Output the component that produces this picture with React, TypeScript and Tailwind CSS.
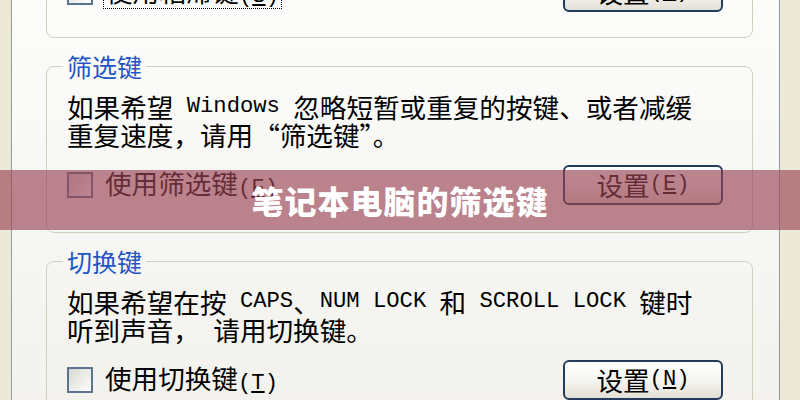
import React from "react";

// Latin runs in the old bitmap UI font are half-width monospace
function Mono({ children }: { children: React.ReactNode }) {
  return (
    <span className="font-['Liberation_Mono',monospace] text-[22.2px] leading-none whitespace-pre">
      {children}
    </span>
  );
}

function CheckBox() {
  return (
    <span className="block w-[26px] h-[26px] shrink-0 border-2 border-[#5a7590] bg-linear-to-br from-[#d8d8d2] to-white" />
  );
}

function SetButton({ hotkey }: { hotkey: string }) {
  return (
    <button className="ml-auto w-[160px] h-[40px] shrink-0 rounded-[6px] border-2 border-[#233b5d] bg-linear-to-b from-white via-[#f6f5f1] to-[#e2e0d6] flex items-center justify-center text-[26.6px] leading-none text-black">
      设置
      <Mono>
        (<u>{hotkey}</u>)
      </Mono>
    </button>
  );
}

interface GroupProps {
  title: string;
  lines: React.ReactNode[];
  label: string;
  labelKey: string;
  buttonKey: string;
}

function Group({ title, lines, label, labelKey, buttonKey }: GroupProps) {
  return (
    <fieldset className="mt-[15px] w-[707px] shrink-0 rounded-[8px] border border-[#d0d0bf] pl-[20px] pr-[29px] pb-[27px]">
      <legend className="ml-[-4px] px-[4px] text-[25px] leading-[26px] text-[#1f56c4]">
        {title}
      </legend>
      <div className="pt-[14px] text-[26.6px] leading-[28px] whitespace-nowrap">
        {lines.map((line, i) => (
          <div key={i} className="h-[28px] flex items-center">
            {line}
          </div>
        ))}
      </div>
      <div className="mt-[16px] h-[40px] flex items-center">
        <CheckBox />
        <span className="ml-[12px] text-[26.6px] leading-none whitespace-nowrap">
          {label}
          <Mono>
            (<u>{labelKey}</u>)
          </Mono>
        </span>
        <SetButton hotkey={buttonKey} />
      </div>
    </fieldset>
  );
}

export default function App() {
  return (
    <div
      lang="zh-CN"
      className="relative w-[800px] h-[400px] overflow-hidden flex bg-[#ece9d8] pl-[11px] text-black font-['Noto_Sans_CJK_SC',sans-serif]"
    >
      {/* dialog tab panel */}
      <div className="w-[769px] h-full shrink-0 flex flex-col border-x border-[#919b9c] bg-linear-to-b from-[#fcfcfb] to-[#f3f2ed] pl-[34px]">
        {/* StickyKeys group, mostly scrolled off the top */}
        <div className="mt-[-42px] h-[80px] w-[707px] shrink-0 flex items-end rounded-[8px] border border-[#d0d0bf] pl-[20px] pr-[29px] pb-[25px]">
          <div className="h-[40px] w-full flex items-center">
            <CheckBox />
            <span className="ml-[10px] px-[2px] border border-dotted border-black text-[26.6px] leading-[30px] whitespace-nowrap">
              使用粘滞键
              <Mono>
                (<u>S</u>)
              </Mono>
            </span>
            <SetButton hotkey="L" />
          </div>
        </div>

        <Group
          title="筛选键"
          lines={[
            <>
              如果希望<Mono> Windows </Mono>忽略短暂或重复的按键、或者减缓
            </>,
            <>重复速度，请用“筛选键”。</>,
          ]}
          label="使用筛选键"
          labelKey="F"
          buttonKey="E"
        />

        <Group
          title="切换键"
          lines={[
            <>
              如果希望在按<Mono> CAPS</Mono>、<Mono>NUM LOCK </Mono>和
              <Mono> SCROLL LOCK </Mono>键时
            </>,
            <>
              听到声音，<Mono> </Mono>请用切换键。
            </>,
          ]}
          label="使用切换键"
          labelKey="T"
          buttonKey="N"
        />
      </div>

      {/* caption banner laid over the screenshot */}
      <div className="absolute inset-x-0 top-[170px] h-[60px] flex items-center justify-center bg-[#9a4455]/65">
        <span className="text-white font-black text-[32px] leading-none tracking-[1px]">
          笔记本电脑的筛选键
        </span>
      </div>
    </div>
  );
}
